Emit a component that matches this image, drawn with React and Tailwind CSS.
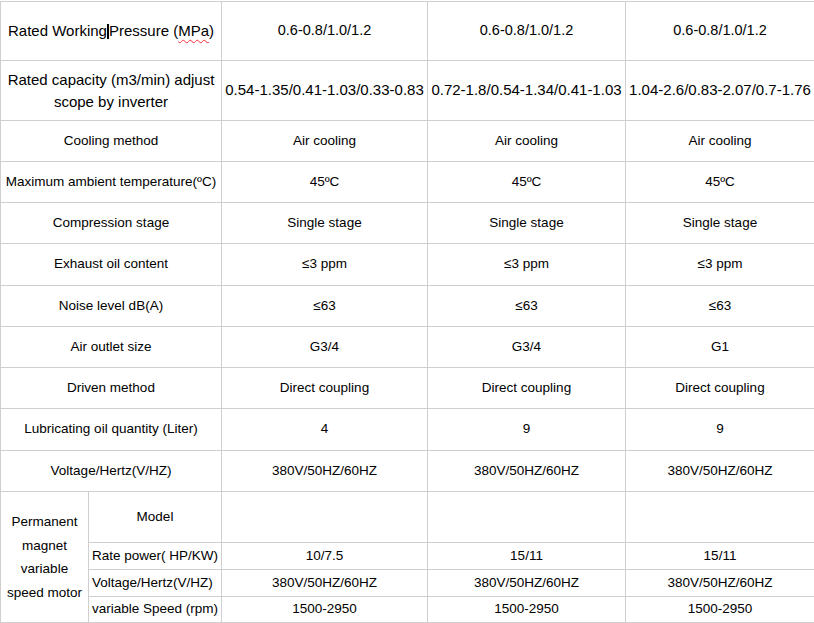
const ROWS = [
  ['Cooling method', 'Air cooling', 'Air cooling', 'Air cooling'],
  ['Maximum ambient temperature(ºC)', '45ºC', '45ºC', '45ºC'],
  ['Compression stage', 'Single stage', 'Single stage', 'Single stage'],
  ['Exhaust oil content', '≤3 ppm', '≤3 ppm', '≤3 ppm'],
  ['Noise level dB(A)', '≤63', '≤63', '≤63'],
  ['Air outlet size', 'G3/4', 'G3/4', 'G1'],
  ['Driven method', 'Direct coupling', 'Direct coupling', 'Direct coupling'],
  ['Lubricating oil quantity (Liter)', '4', '9', '9'],
  ['Voltage/Hertz(V/HZ)', '380V/50HZ/60HZ', '380V/50HZ/60HZ', '380V/50HZ/60HZ'],
];

const MOTOR = [
  ['Rate power( HP/KW)', '10/7.5', '15/11', '15/11'],
  ['Voltage/Hertz(V/HZ)', '380V/50HZ/60HZ', '380V/50HZ/60HZ', '380V/50HZ/60HZ'],
  ['variable Speed (rpm)', '1500-2950', '1500-2950', '1500-2950'],
];

const cell = 'bg-white flex items-center justify-center text-center whitespace-nowrap';

export default function App() {
  return (
    <div className="bg-white pt-px font-['Liberation_Sans',Arial,sans-serif] text-[13.5px] text-black">
      <div className="w-full grid gap-px bg-[#cfcfcf] pl-px pt-px pb-px grid-cols-[87px_132px_205px_197px_1fr] grid-rows-[58px_59px_40px_40px_40px_41px_40px_40px_40px_41px_40px_50px_26px_26px_25px]">
        {/* header rows */}
        <div className={`${cell} col-span-2 text-[15px]`}>
          <span>
            Rated Working<span className="inline-block w-[2px] h-[15px] bg-black align-[-3px]" />Pressure (
            <span className="underline decoration-wavy decoration-red-500 decoration-1 underline-offset-[3px]">MPa</span>)
          </span>
        </div>
        {[1, 2, 3].map(i => <div key={i} className={`${cell} text-[14.5px]`}>0.6-0.8/1.0/1.2</div>)}

        <div className={`${cell} col-span-2 flex-col leading-[22px] text-[15px]`}>
          <span>Rated capacity (m3/min) adjust</span>
          <span>scope by inverter</span>
        </div>
        <div className={`${cell} text-[15px]`}>0.54-1.35/0.41-1.03/0.33-0.83</div>
        <div className={`${cell} text-[15px]`}>0.72-1.8/0.54-1.34/0.41-1.03</div>
        <div className={`${cell} text-[15px]`}>1.04-2.6/0.83-2.07/0.7-1.76</div>

        {ROWS.map(r => [
          <div key={r[0] + 'a'} className={`${cell} col-span-2`}>{r[0]}</div>,
          ...r.slice(1).map((v, j) => <div key={r[0] + j} className={cell}>{v}</div>),
        ])}

        {/* motor block */}
        <div className="bg-white row-span-4 flex items-center justify-center text-center leading-[23.5px] px-0.5">
          Permanent magnet variable speed motor
        </div>
        <div className={cell}>Model</div>
        <div className="bg-white" />
        <div className="bg-white" />
        <div className="bg-white" />

        {MOTOR.map(r => [
          <div key={r[0] + 'a'} className="bg-white flex items-center pl-[3px] whitespace-nowrap">{r[0]}</div>,
          ...r.slice(1).map((v, j) => <div key={r[0] + j} className={cell}>{v}</div>),
        ])}
      </div>
    </div>
  );
}
